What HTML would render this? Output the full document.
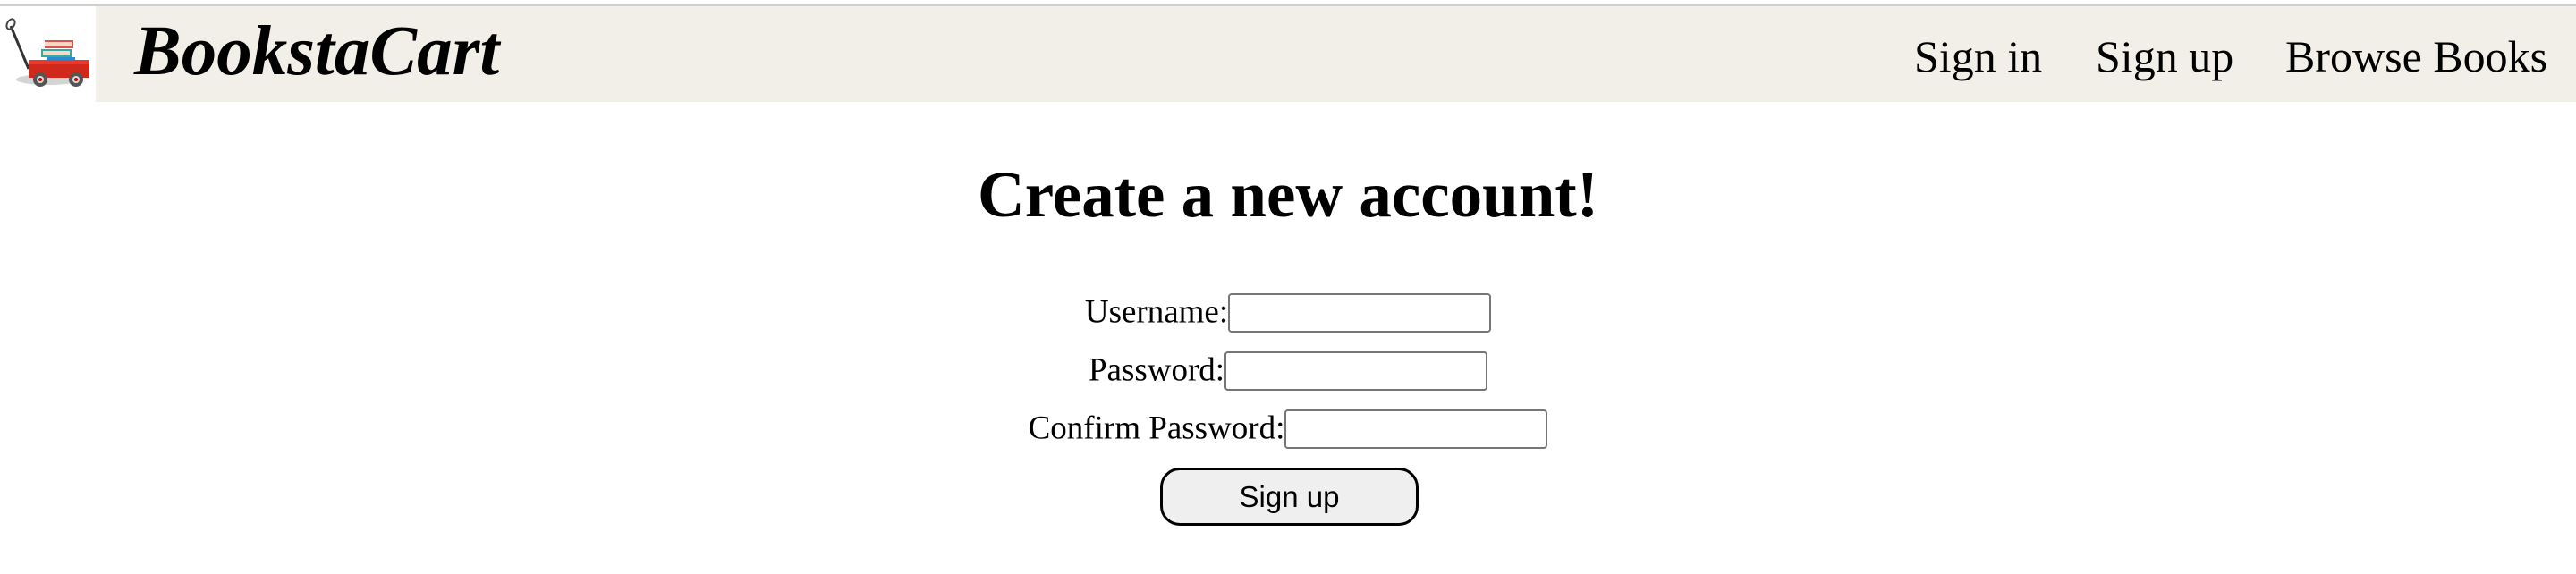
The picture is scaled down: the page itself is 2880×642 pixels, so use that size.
<!DOCTYPE html>
<html><head><meta charset="utf-8"><style>
html,body{margin:0;padding:0;background:#fff;width:2880px;height:642px;overflow:hidden}
body{font-family:"Liberation Serif",serif;color:#000;position:relative}
.topline{position:absolute;left:0;top:5px;width:2880px;height:2px;background:#d0d0d0}
.hdr{position:absolute;left:0;top:7px;width:2880px;height:107px;background:#f2efe9}
.logo{position:absolute;left:0;top:7px;width:107px;height:107px;background:#fff}
.brand{position:absolute;left:150px;top:8px;font-size:79px;font-weight:bold;font-style:italic;line-height:100px}
.nav{position:absolute;top:33px;font-size:50px;line-height:60px}
h1{position:absolute;left:0;width:2880px;top:168px;margin:0;text-align:center;font-size:73px;line-height:100px;font-weight:bold}
.row{position:absolute;left:0;width:2880px;text-align:center;font-size:37px;height:44px;line-height:44px}
.row span{vertical-align:middle}
.in{display:inline-block;vertical-align:middle;width:290px;height:40px;border:2px solid #767676;border-radius:4px;box-sizing:content-box;background:#fff}
.btn{position:absolute;left:1297px;top:523px;width:283px;height:59px;border:3px solid #000;border-radius:22px;background:#efefef;font-family:"Liberation Sans",sans-serif;font-size:33px;text-align:center;line-height:59px}
</style></head><body>
<div class="topline"></div>
<div class="hdr"></div>
<div class="logo">
<svg width="107" height="107" viewBox="0 0 107 107">
<ellipse cx="54" cy="82" rx="36" ry="6" fill="#d4d4d4"/>
<line x1="12" y1="22" x2="32" y2="70" stroke="#333" stroke-width="3"/>
<ellipse cx="12" cy="20" rx="4" ry="6" fill="none" stroke="#444" stroke-width="2" transform="rotate(30 12 20)"/>
<rect x="50" y="38" width="32" height="9" fill="#d9534f"/><rect x="50" y="40" width="30" height="5" fill="#f7d9c4"/>
<rect x="46" y="48" width="34" height="9" fill="#3aa6a0"/><rect x="48" y="50" width="30" height="5" fill="#f7d9c4"/>
<rect x="52" y="57" width="32" height="5" fill="#2d8ccf"/>
<rect x="32" y="60" width="68" height="20" fill="#d0281b"/>
<rect x="32" y="60" width="68" height="5" fill="#e63a2c"/>
<circle cx="45" cy="82" r="8" fill="#555"/><circle cx="45" cy="82" r="4" fill="#ddd"/><circle cx="45" cy="82" r="2" fill="#c00"/>
<circle cx="85" cy="82" r="8" fill="#555"/><circle cx="85" cy="82" r="4" fill="#ddd"/><circle cx="85" cy="82" r="2" fill="#c00"/>
</svg></div>
<div class="brand">BookstaCart</div>
<div class="nav" style="left:2140px">Sign in</div>
<div class="nav" style="left:2343px">Sign up</div>
<div class="nav" style="left:2555px">Browse Books</div>
<h1>Create a new account!</h1>
<div class="row" style="top:325px"><span>Username:</span><span class="in"></span></div>
<div class="row" style="top:390px"><span>Password:</span><span class="in"></span></div>
<div class="row" style="top:455px"><span>Confirm Password:</span><span class="in"></span></div>
<div class="btn">Sign up</div>
</body></html>
